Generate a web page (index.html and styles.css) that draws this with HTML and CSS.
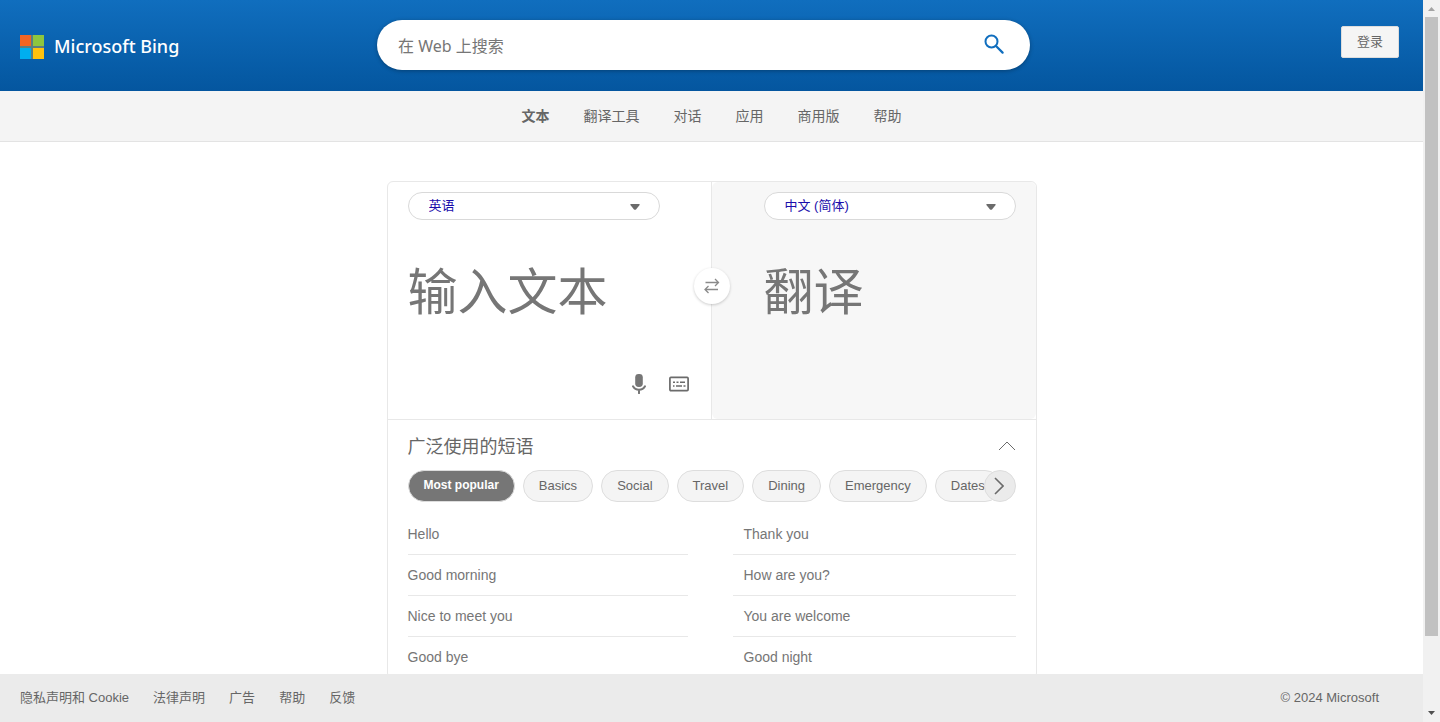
FILE: index.html
```html
<!DOCTYPE html>
<html lang="zh-CN">
<head>
<meta charset="utf-8">
<title>Microsoft Bing</title>
<link rel="stylesheet" href="styles.css">
</head>
<body>
<div class="window">
  <div class="page">
    <header class="header">
      <a class="brand" href="#">
        <svg class="brand-mark" viewBox="0 0 24 24" aria-hidden="true">
          <path fill="#5b7f80" d="M0 0h24v24H0z"/>
          <path fill="#f26522" d="M0 0h11v11H0z"/>
          <path fill="#8dc63f" d="M13 0h11v11H13z"/>
          <path fill="#00aeef" d="M0 13h11v11H0z"/>
          <path fill="#ffc20e" d="M13 13h11v11H13z"/>
        </svg>
        <span class="brand-name">Microsoft Bing</span>
      </a>
      <form class="search" role="search">
        <input class="search-input" type="search" placeholder="在 Web 上搜索" aria-label="在 Web 上搜索">
        <button class="search-button" type="button" aria-label="搜索">
          <svg viewBox="0 0 20 20" width="20" height="20" fill="none" stroke="#106ebe" aria-hidden="true">
            <circle cx="7.500" cy="7.500" r="6" stroke-width="2"/>
            <path d="M12 12 18.600 18.600" stroke-width="2.200" stroke-linecap="round"/>
          </svg>
        </button>
      </form>
      <button class="sign-in" type="button">登录</button>
    </header>
    <nav class="nav">
      <a class="nav-link nav-current" href="#">文本</a>
      <a class="nav-link" href="#">翻译工具</a>
      <a class="nav-link" href="#">对话</a>
      <a class="nav-link" href="#">应用</a>
      <a class="nav-link" href="#">商用版</a>
      <a class="nav-link" href="#">帮助</a>
    </nav>
    <main class="main">
      <div class="card">
        <div class="panes">
          <section class="pane">
            <div class="language">
              <select class="language-select" aria-label="源语言"><option>英语</option></select>
              <svg class="language-arrow" viewBox="0 0 10 6" aria-hidden="true"><path fill="#6b6b6b" d="M1 0h8q1 0 .6 1L6 5.400Q5 6.200 4 5.400L.4 1Q0 0 1 0z"/></svg>
            </div>
            <textarea class="text" placeholder="输入文本" aria-label="输入文本" rows="1"></textarea>
            <div class="tools">
              <button class="tool" type="button" aria-label="语音输入">
                <svg viewBox="0 0 20 20" width="20" height="20" aria-hidden="true">
                  <rect x="6.200" y="0" width="7.600" height="13" rx="3.400" fill="#767676"/>
                  <path d="M4 12.300c1.200 2.300 3.300 3.500 6 3.500s4.800-1.200 6-3.500M10 16v3.200" fill="none" stroke="#767676" stroke-width="2" stroke-linecap="round"/>
                </svg>
              </button>
              <button class="tool" type="button" aria-label="键盘">
                <svg viewBox="0 0 20 20" width="20" height="20" fill="none" stroke="#6b6b6b" aria-hidden="true">
                  <rect x="0.900" y="3.400" width="18.200" height="13.200" rx="1" stroke-width="1.700"/>
                  <path d="M4 8.200h2M7.500 8.200h2M11 8.200h5M4 12h1.500M7 12h6M14.500 12h2" stroke-width="1.400"/>
                </svg>
              </button>
            </div>
          </section>
          <section class="pane pane-target">
            <div class="language">
              <select class="language-select" aria-label="目标语言"><option>中文 (简体)</option></select>
              <svg class="language-arrow" viewBox="0 0 10 6" aria-hidden="true"><path fill="#6b6b6b" d="M1 0h8q1 0 .6 1L6 5.400Q5 6.200 4 5.400L.4 1Q0 0 1 0z"/></svg>
            </div>
            <textarea class="text" placeholder="翻译" aria-label="翻译" rows="1" readonly></textarea>
          </section>
          <button class="swap" type="button" aria-label="交换语言">
            <svg viewBox="0 0 16 16" width="16" height="16" fill="none" stroke="#8a8a8a" stroke-width="1.300" aria-hidden="true">
              <path d="M1.500 4.500H14M11 1l3.500 3.500L11 8M14 11.500H1.500M4.500 8 1 11.500 4.500 15"/>
            </svg>
          </button>
        </div>
        <section class="phrases">
          <div class="phrases-head">
            <h2 class="phrases-title">广泛使用的短语</h2>
            <button class="collapse" type="button" aria-label="折叠">
              <svg viewBox="0 0 18 10" width="18" height="10" fill="none" stroke="#6b6b6b" aria-hidden="true"><path d="M1 9 9 1l8 8"/></svg>
            </button>
          </div>
          <div class="topics">
            <div class="chips">
              <button class="chip chip-active" type="button">Most popular</button>
              <button class="chip" type="button">Basics</button>
              <button class="chip" type="button">Social</button>
              <button class="chip" type="button">Travel</button>
              <button class="chip" type="button">Dining</button>
              <button class="chip" type="button">Emergency</button>
              <button class="chip" type="button">Dates</button>
            </div>
            <button class="next" type="button" aria-label="下一个">
              <svg viewBox="0 0 10 18" width="10" height="18" fill="none" stroke="#6b6b6b" stroke-width="1.600" aria-hidden="true"><path d="M1 1l8 8-8 8"/></svg>
            </button>
          </div>
          <div class="phrase-columns">
            <ul class="phrase-list">
              <li><a class="phrase" href="#">Hello</a></li>
              <li><a class="phrase" href="#">Good morning</a></li>
              <li><a class="phrase" href="#">Nice to meet you</a></li>
              <li><a class="phrase" href="#">Good bye</a></li>
            </ul>
            <ul class="phrase-list phrase-list-inset">
              <li><a class="phrase" href="#">Thank you</a></li>
              <li><a class="phrase" href="#">How are you?</a></li>
              <li><a class="phrase" href="#">You are welcome</a></li>
              <li><a class="phrase" href="#">Good night</a></li>
            </ul>
          </div>
        </section>
      </div>
    </main>
    <footer class="footer">
      <a href="#">隐私声明和 Cookie</a>
      <a href="#">法律声明</a>
      <a href="#">广告</a>
      <a href="#">帮助</a>
      <a href="#">反馈</a>
      <span class="copyright">© 2024 Microsoft</span>
    </footer>
  </div>
  <div class="scrollbar" aria-hidden="true">
    <svg class="scroll-arrow" viewBox="0 0 17 17"><path fill="#a3a3a3" d="M5 11h7L8.500 7z"/></svg>
    <div class="scroll-track"><div class="scroll-thumb"></div></div>
    <svg class="scroll-arrow" viewBox="0 0 17 17"><path fill="#505050" d="M5 6h7L8.500 10z"/></svg>
  </div>
</div>
</body>
</html>
```
FILE: styles.css
```css
* {
  box-sizing: border-box;
}

body {
  margin: 0;
  background: #fff;
  color: #666;
  font-family: "Liberation Sans", "Noto Sans CJK SC", sans-serif;
  font-size: 13px;
}

button,
input,
select,
textarea {
  font: inherit;
  color: inherit;
}

button {
  padding: 0;
  border: 0;
  background: none;
  cursor: pointer;
}

a {
  color: inherit;
  text-decoration: none;
}

svg {
  display: block;
}

.window {
  display: grid;
  grid-template-columns: minmax(0, 1fr) 17px;
  height: 100vh;
}

.page {
  display: flex;
  flex-direction: column;
  min-height: 0;
}

.header {
  display: flex;
  align-items: flex-start;
  padding: 20px 24px 17px 20px;
  background: linear-gradient(#106ebe, #04569f);
}

.brand {
  display: flex;
  flex: 0 1 357px;
  align-items: center;
  gap: 10px;
  height: 54px;
  color: #fff;
  font-family: "Noto Sans", sans-serif;
  font-size: 18px;
  font-weight: 500;
}

.brand-name {
  padding-bottom: 2px;
}

.brand-mark {
  width: 24px;
  height: 24px;
}

.search {
  display: flex;
  flex: 0 1 653px;
  height: 50px;
  padding: 0 26px 0 21px;
  border-radius: 25px;
  background: #fff;
  box-shadow: 0 1px 4px rgba(0, 0, 0, 0.3);
}

.search-input {
  flex: 1;
  min-width: 0;
  padding: 2px 0 0;
  border: 0;
  outline: 0;
  background: none;
  font-family: "Noto Sans", "Noto Sans CJK SC", sans-serif;
  font-size: 16px;
}

.search-input::placeholder {
  color: #767676;
  opacity: 1;
}

.search-button {
  display: flex;
  align-items: center;
  padding-bottom: 2px;
}

.sign-in {
  width: 58px;
  height: 32px;
  margin: 6px 0 0 auto;
  padding-bottom: 4px;
  border: 1px solid #ddd;
  border-radius: 2px;
  background: #f5f5f5;
}

.nav {
  display: flex;
  justify-content: center;
  gap: 34px;
  border-bottom: 1px solid #e3e3e3;
  background: #f4f4f4;
  font-size: 14px;
  line-height: 50px;
}

.nav-current {
  font-weight: 700;
}

.main {
  flex: 1;
  min-height: 0;
  padding-top: 39px;
  overflow: hidden;
}

.card {
  max-width: 650px;
  margin: 0 auto;
  border: 1px solid #e8e8e8;
  border-radius: 6px;
}

.panes {
  position: relative;
  display: grid;
  grid-template-columns: 1fr 1fr;
  border-bottom: 1px solid #e8e8e8;
}

.pane {
  min-height: 237px;
  padding: 10px 20px 0;
  border-right: 1px solid #e8e8e8;
}

.pane-target {
  padding-left: 52px;
  border-right: 0;
  border-radius: 6px;
  background: #f7f7f7;
}

.language {
  position: relative;
  max-width: 252px;
}

.language-select {
  display: block;
  width: 100%;
  height: 28px;
  padding: 0 20px 2px;
  border: 1px solid #d9d9d9;
  border-radius: 14px;
  background: #fff;
  color: #1a0dab;
  appearance: none;
}

.language-arrow {
  position: absolute;
  top: 12px;
  right: 20px;
  width: 10px;
  height: 6px;
  pointer-events: none;
}

.text {
  display: block;
  width: 100%;
  height: 80px;
  margin-top: 28px;
  padding: 0;
  border: 0;
  outline: 0;
  background: none;
  font-family: "Noto Sans CJK SC", sans-serif;
  font-size: 50px;
  line-height: 80px;
  resize: none;
  overflow: hidden;
}

.text::placeholder {
  color: #767676;
  opacity: 1;
}

.tools {
  display: flex;
  justify-content: flex-end;
  gap: 20px;
  padding: 46px 2px 0 0;
}

.swap {
  position: absolute;
  top: 86px;
  left: calc(50% - 18px);
  display: grid;
  place-items: center;
  width: 36px;
  height: 36px;
  border-radius: 50%;
  background: #fff;
  box-shadow: 0 1px 3px rgba(0, 0, 0, 0.2);
}

.phrases {
  padding: 14px 20px 0;
}

.phrases-head {
  display: flex;
  align-items: center;
  justify-content: space-between;
  height: 24px;
}

.phrases-title {
  margin: 0;
  padding-bottom: 2px;
  font-size: 18px;
  font-weight: 400;
}

.topics {
  position: relative;
  margin: 12px 0;
}

.chips {
  display: flex;
  gap: 8px;
  overflow: hidden;
  border-radius: 16px;
}

.chip {
  flex: none;
  height: 32px;
  padding: 0 15px 2px;
  border: 1px solid #ddd;
  border-radius: 16px;
  background: #f4f4f4;
}

.chip-active {
  background: #767676;
  color: #fff;
  font-size: 12px;
  font-weight: 700;
}

.next {
  position: absolute;
  top: 0;
  right: 0;
  display: grid;
  place-items: center;
  width: 32px;
  height: 32px;
  padding-right: 2px;
  border: 1px solid #ddd;
  border-radius: 50%;
  background: #ebebeb;
}

.phrase-columns {
  display: grid;
  grid-template-columns: 280fr 283fr;
  gap: 45px;
  color: #767676;
  font-size: 14px;
}

.phrase-list {
  margin: 0;
  padding: 0;
  list-style: none;
}

.phrase {
  display: block;
  border-bottom: 1px solid #e8e8e8;
  line-height: 40px;
}

.phrase-list-inset .phrase {
  padding-left: 11px;
}

.footer {
  display: flex;
  gap: 24px;
  padding: 0 44px 0 20px;
  background: #ebebeb;
  line-height: 48px;
}

.copyright {
  margin-left: auto;
}

.scrollbar {
  display: flex;
  flex-direction: column;
  min-height: 0;
  background: #f1f1f1;
}

.scroll-arrow {
  width: 17px;
  height: 17px;
}

.scroll-track {
  flex: 1;
  padding: 0 2px;
}

.scroll-thumb {
  height: 90%;
  background: #c1c1c1;
}
```
